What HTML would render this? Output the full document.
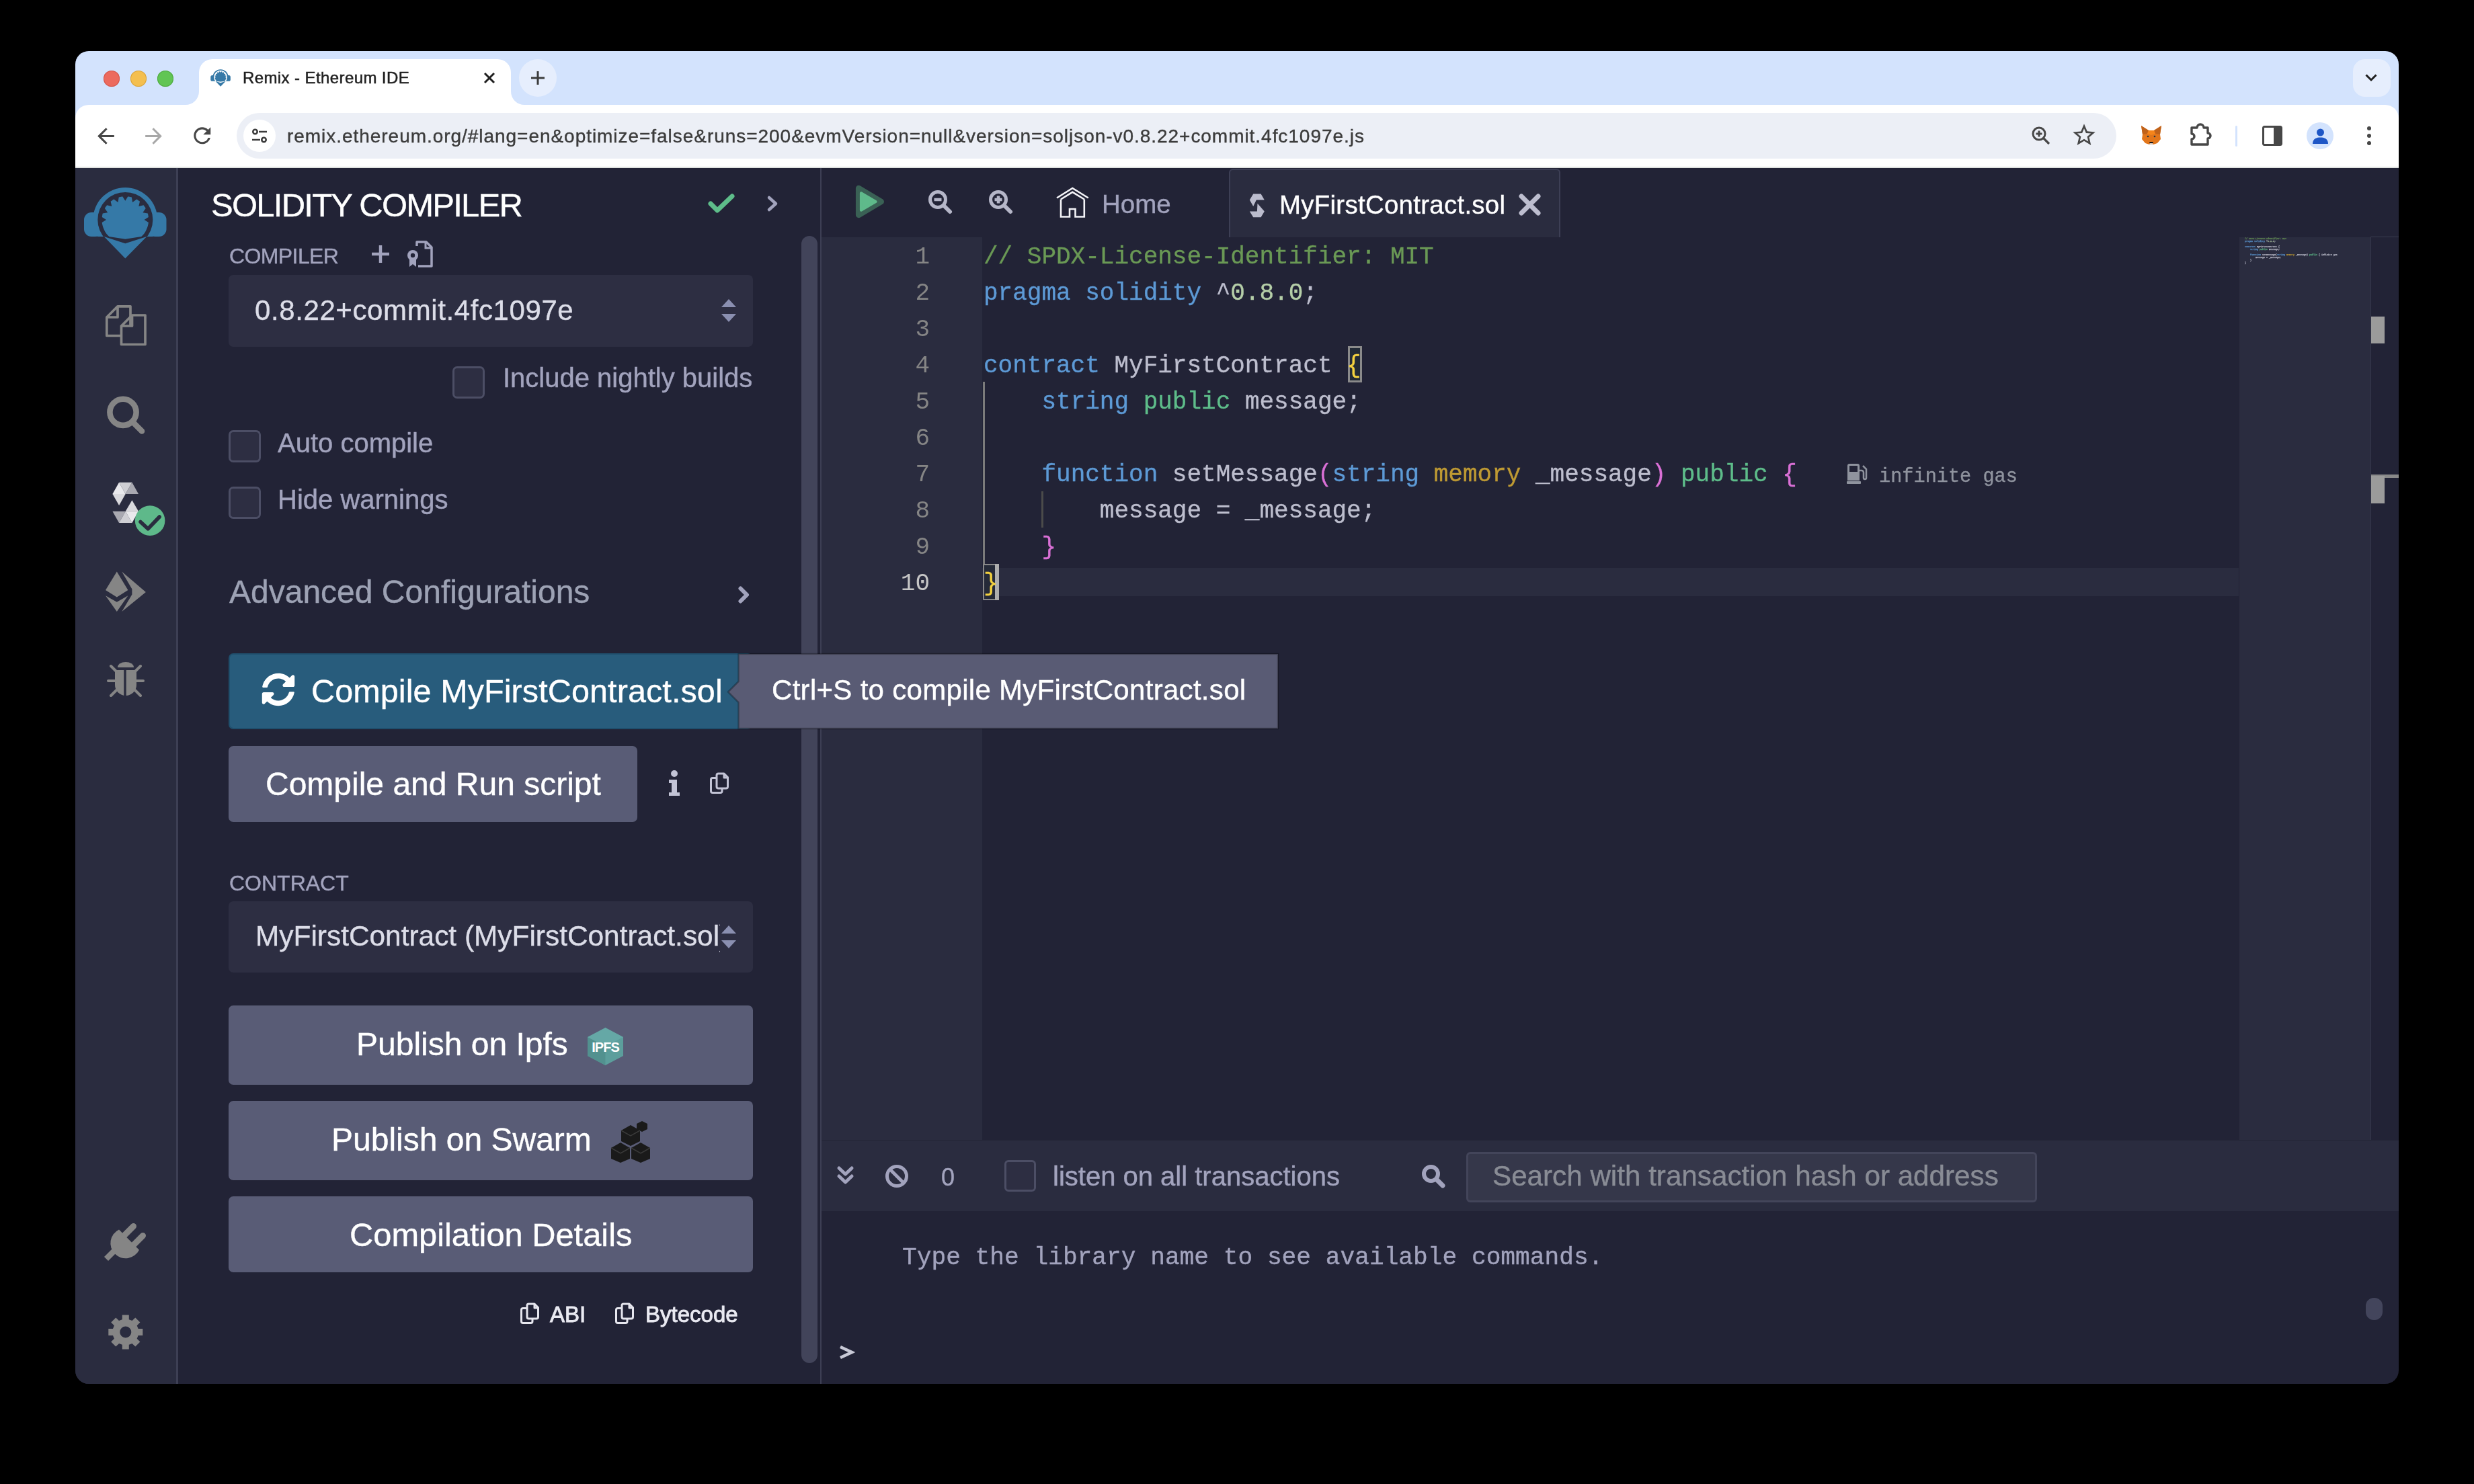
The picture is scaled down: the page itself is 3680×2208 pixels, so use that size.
<!DOCTYPE html>
<html><head><meta charset="utf-8">
<style>
*{margin:0;padding:0;box-sizing:border-box}
html,body{width:3680px;height:2208px;background:#000;overflow:hidden}
body{position:relative;font-family:"Liberation Sans",sans-serif}
.a{position:absolute}
.t{position:absolute;line-height:1;white-space:nowrap}
.m{font-family:"Liberation Mono",monospace}
.t,.m{will-change:transform}
.t{-webkit-text-stroke:0.4px currentColor}
.t.m{-webkit-text-stroke:0}
svg{position:absolute;overflow:visible}
#win{position:absolute;left:0;top:0;width:3680px;height:2208px;clip-path:inset(76px 112px 149px 112px round 20px);background:#222336}
</style></head><body>
<div id="win">
<!-- ===== BROWSER CHROME ===== -->
<div class="a" style="left:0;top:0;width:3680px;height:190px;background:#d3e3fd"></div>
<div class="a" style="left:112px;top:156px;width:3456px;height:94px;background:#fff;border-radius:20px 20px 0 0"></div>
<div class="a" style="left:0;top:248px;width:3680px;height:2px;background:#e1e3e1"></div>
<!-- traffic lights -->
<div class="a" style="left:154px;top:105px;width:24px;height:24px;border-radius:50%;background:#ec6a5e;box-shadow:inset 0 0 0 1px #d2544a"></div>
<div class="a" style="left:194px;top:105px;width:24px;height:24px;border-radius:50%;background:#f4bf4f;box-shadow:inset 0 0 0 1px #d9a33a"></div>
<div class="a" style="left:234px;top:105px;width:24px;height:24px;border-radius:50%;background:#61c554;box-shadow:inset 0 0 0 1px #4ea83f"></div>
<!-- active tab -->
<svg style="left:0;top:0" width="3680" height="260"><path d="M276 156 A20 20 0 0 0 296 136 L296 108 A20 20 0 0 1 316 88 L740 88 A20 20 0 0 1 760 108 L760 136 A20 20 0 0 0 780 156 Z" fill="#fff"/></svg>
<!-- favicon -->
<svg style="left:0;top:0" width="0" height="0"><defs>
<clipPath id="clipTop"><rect x="0" y="0" width="132" height="82"/></clipPath>
<clipPath id="clipShell"><path d="M0 0H132V75.6L66.3 85.8L0 75.6Z"/></clipPath>
<g id="logo">
<circle cx="66.3" cy="57" r="48" fill="#3579a7" clip-path="url(#clipTop)"/>
<rect x="5" y="46" width="28" height="36" rx="11" fill="#3579a7"/>
<rect x="99.5" y="46" width="28" height="36" rx="11" fill="#3579a7"/>
<circle cx="66.3" cy="57" r="41" fill="var(--lbg)"/>
<polygon points="62.4,22.4 66.3,28.7 70.2,22.4 71.4,22.6 72.5,22.8 73.7,23.0 74.8,23.2 75.9,23.5 77.1,30.9 83.2,26.6 84.2,27.1 85.2,27.7 86.1,28.4 87.0,29.1 88.0,29.8 86.3,37.0 93.5,35.3 94.2,36.3 94.9,37.2 95.6,38.1 96.2,39.1 96.7,40.1 92.4,46.2 99.8,47.4 100.1,48.5 100.3,49.6 100.5,50.8 100.7,51.9 100.9,53.1 94.6,57.0 100.9,60.9 100.6,62.9 100.2,64.8 99.7,66.7 99.1,68.5 97.3,72.8 96.0,75.2 94.5,77.5 92.8,79.6 88.9,83.5 86.8,85.2 84.5,86.7 82.1,88.0 77.1,90.1 74.4,90.8 71.7,91.4 69.0,91.7 63.6,91.7 60.9,91.4 58.2,90.8 55.5,90.1 50.5,88.0 48.1,86.7 45.8,85.2 43.7,83.5 39.8,79.6 38.1,77.5 36.6,75.2 35.3,72.8 33.5,68.5 32.9,66.7 32.4,64.8 32.0,62.9 31.7,60.9 38.0,57.0 31.7,53.1 31.9,51.9 32.1,50.8 32.3,49.6 32.5,48.5 32.8,47.4 40.2,46.2 35.9,40.1 36.4,39.1 37.0,38.1 37.7,37.2 38.4,36.3 39.1,35.3 46.3,37.0 44.6,29.8 45.6,29.1 46.5,28.4 47.4,27.7 48.4,27.1 49.4,26.6 55.5,30.9 56.7,23.5 57.8,23.2 58.9,23.0 60.1,22.8 61.2,22.6" fill="#3579a7" clip-path="url(#clipShell)"/>
<path d="M34.8 82.1L66.3 92.2L98.3 82.1L66.3 114.5Z" fill="#3579a7"/>
</g></defs></svg>
<svg style="left:312px;top:101px;--lbg:#fff" width="32" height="29" viewBox="0 0 132 120"><use href="#logo"/></svg>
<div class="t" style="left:361px;top:103.7px;font-size:24px;color:#1f1f1f;letter-spacing:0.4px;-webkit-text-stroke:0.5px #1f1f1f">Remix - Ethereum IDE</div>
<svg style="left:720px;top:108px" width="16" height="16"><path d="M1 1L15 15M15 1L1 15" stroke="#1f1f1f" stroke-width="3"/></svg>
<!-- new tab -->
<div class="a" style="left:772px;top:88px;width:56px;height:56px;border-radius:50%;background:#e6eefd"></div>
<svg style="left:790px;top:106px" width="20" height="20"><path d="M10 0V20M0 10H20" stroke="#3c3c3c" stroke-width="3"/></svg>
<!-- dropdown -->
<div class="a" style="left:3500px;top:88px;width:56px;height:56px;border-radius:18px;background:#e6eefd"></div>
<svg style="left:3518px;top:110px" width="18" height="12"><path d="M1.5 1.5L9 9L16.5 1.5" stroke="#1f1f1f" stroke-width="3" fill="none"/></svg>
<!-- nav icons -->
<svg style="left:138.5px;top:183.5px" width="37" height="37" viewBox="0 0 24 24"><path d="M20 11H7.83l5.59-5.59L12 4l-8 8 8 8 1.41-1.41L7.83 13H20v-2z" fill="#474747"/></svg>
<svg style="left:209.5px;top:183.5px" width="37" height="37" viewBox="0 0 24 24"><path d="M12 4l-1.41 1.41L16.17 11H4v2h12.17l-5.58 5.59L12 20l8-8z" fill="#a8a8a8"/></svg>
<svg style="left:281.5px;top:183px" width="37.5" height="37.5" viewBox="0 0 24 24"><path d="M17.65 6.35A7.958 7.958 0 0 0 12 4c-4.42 0-7.99 3.58-7.99 8s3.57 8 7.99 8c3.73 0 6.84-2.55 7.73-6h-2.08A5.99 5.99 0 0 1 12 18c-3.31 0-6-2.69-6-6s2.69-6 6-6c1.66 0 3.14.69 4.22 1.78L13 11h7V4l-2.35 2.35z" fill="#474747"/></svg>
<!-- omnibox -->
<div class="a" style="left:352px;top:168px;width:2796px;height:68px;border-radius:34px;background:#eceff6"></div>
<div class="a" style="left:362px;top:178px;width:48px;height:48px;border-radius:50%;background:#fff"></div>
<svg style="left:373px;top:189px" width="26" height="26" viewBox="0 0 26 26"><circle cx="6.5" cy="7" r="3.2" fill="none" stroke="#3c3c3c" stroke-width="2.6"/><path d="M12 7H24" stroke="#3c3c3c" stroke-width="2.6"/><circle cx="19.5" cy="19" r="3.2" fill="none" stroke="#3c3c3c" stroke-width="2.6"/><path d="M2 19H14" stroke="#3c3c3c" stroke-width="2.6"/></svg>
<div class="t" style="left:427px;top:188.7px;font-size:28px;color:#3c3c3c;letter-spacing:0.96px">remix.ethereum.org/#lang=en&amp;optimize=false&amp;runs=200&amp;evmVersion=null&amp;version=soljson-v0.8.22+commit.4fc1097e.js</div>
<!-- zoom + star -->
<svg style="left:3021px;top:187px" width="30" height="30" viewBox="0 0 30 30"><circle cx="12" cy="12" r="9" fill="none" stroke="#474747" stroke-width="3"/><path d="M12 7.5V16.5M7.5 12H16.5" stroke="#474747" stroke-width="3"/><path d="M18.5 18.5L27 27" stroke="#474747" stroke-width="3.2"/></svg>
<svg style="left:3080px;top:181px" width="40" height="40" viewBox="0 0 24 24"><path d="M22 9.24l-7.19-.62L12 2 9.19 8.63 2 9.24l5.46 4.73L5.82 21 12 17.27 18.18 21l-1.63-7.03L22 9.24zM12 15.4l-3.76 2.27 1-4.28-3.32-2.88 4.38-.38L12 6.1l1.71 4.04 4.38.38-3.32 2.88 1 4.28L12 15.4z" fill="#474747"/></svg>
<!-- metamask fox -->
<svg style="left:3184px;top:186px" width="32" height="30" viewBox="0 0 32 30"><path d="M1 1L12 8H20L31 1L29 14L30 21L25 27L19 29H13L7 27L2 21L3 14Z" fill="#e2761b"/><path d="M1 1L12 8L10 13L3 14Z M31 1L20 8L22 13L29 14Z" fill="#c0621a"/><path d="M12 8H20L22 13L16 15L10 13Z" fill="#f6851b"/><path d="M13 25H19L18 28H14Z" fill="#161616"/><path d="M13 29H19L18 27H14Z" fill="#d7c1b3"/><circle cx="11" cy="17" r="1.3" fill="#233447"/><circle cx="21" cy="17" r="1.3" fill="#233447"/></svg>
<!-- puzzle -->
<svg style="left:3256px;top:184px" width="34" height="34" viewBox="0 0 34 34"><path d="M4 6H12A5 5 0 0 1 22 6H28V14A4 4 0 0 1 28 22V31H4V23A4 4 0 0 0 4 15Z" fill="none" stroke="#474747" stroke-width="3.4" stroke-linejoin="round"/></svg>
<div class="a" style="left:3325px;top:187px;width:3px;height:31px;border-radius:2px;background:#d3e3fd"></div>
<!-- side panel icon -->
<svg style="left:3365px;top:187px" width="30" height="30" viewBox="0 0 30 30"><rect x="1.5" y="1.5" width="27" height="27" rx="2" fill="none" stroke="#474747" stroke-width="3"/><rect x="17" y="1.5" width="11.5" height="27" fill="#474747"/></svg>
<!-- profile -->
<div class="a" style="left:3431px;top:182px;width:40px;height:40px;border-radius:50%;background:#d3e3fd"></div>
<svg style="left:3439px;top:190px" width="25" height="25" viewBox="0 0 25 25"><circle cx="12.5" cy="7" r="5.5" fill="#1d56c6"/><path d="M1 24C1 16 7 14.5 12.5 14.5S24 16 24 24Z" fill="#1d56c6"/></svg>
<!-- menu dots -->
<svg style="left:3518px;top:187px" width="12" height="30"><circle cx="6" cy="4" r="3" fill="#474747"/><circle cx="6" cy="15" r="3" fill="#474747"/><circle cx="6" cy="26" r="3" fill="#474747"/></svg>

<!-- ===== REMIX ===== -->
<!-- icon bar -->
<div class="a" style="left:112px;top:250px;width:150px;height:1810px;background:#2a2c3f"></div>
<div class="a" style="left:262px;top:250px;width:3px;height:1810px;background:#3d3f54"></div>
<svg style="left:120px;top:270px;--lbg:#2a2c3f" width="132" height="120" viewBox="0 0 132 120"><use href="#logo"/></svg>
<!-- file explorer icon -->
<svg style="left:157px;top:454px" width="60" height="60" viewBox="0 0 60 60"><path d="M1.8 18L18 1.8H37V45.5H1.8Z M1.8 18H18V1.8" fill="none" stroke="#858585" stroke-width="3.7" stroke-linejoin="round"/><path d="M23.5 31L39.5 15H59V58.5H23.5Z M23.5 31H39.5V15" fill="#2a2c3f" stroke="#858585" stroke-width="3.7" stroke-linejoin="round"/></svg>
<!-- search icon -->
<svg style="left:158px;top:589px" width="58" height="58" viewBox="0 0 58 58"><circle cx="25" cy="24.3" r="19.6" fill="none" stroke="#858585" stroke-width="8.6"/><path d="M40 39.5L53 52.5" stroke="#858585" stroke-width="8.5" stroke-linecap="round"/></svg>
<!-- solidity icon with badge -->
<svg style="left:166px;top:717px" width="80" height="80" viewBox="0 0 80 80">
<path d="M1.4 17.9L11.1 0.8L20.7 17.9Z" fill="#e9e9ec"/><path d="M11.1 0.8H30.4L20.7 17.9Z" fill="#cfcfd4"/><path d="M30.4 0.8L40 17.9H20.7Z" fill="#a9a9b1"/><path d="M1.4 17.9H20.7L11.1 34.9Z" fill="#d9d9dd"/>
<path d="M20.7 43.8L30.4 27.2L40 43.8Z" fill="#d9d9dd"/><path d="M1.4 43.8H20.7L11.1 60.9Z" fill="#a9a9b1"/><path d="M11.1 60.9L20.7 43.8L30.4 60.9Z" fill="#cfcfd4"/><path d="M20.7 43.8H40L30.4 60.9Z" fill="#e9e9ec"/>
<circle cx="57.1" cy="57.6" r="22.3" fill="#5eb98a"/><path d="M43 59.4L54.1 69.8L71.2 52" fill="none" stroke="#2a2c3f" stroke-width="5.5" stroke-linecap="round" stroke-linejoin="round"/>
</svg>
<!-- deploy icon -->
<svg style="left:156px;top:850px" width="62" height="62" viewBox="0 0 62 62"><path d="M17.8 0.6L1 28L17.8 38.4L34.4 28Z" fill="#858585"/><path d="M1 36.2L17.8 45.8L34.4 36.2L17.8 60Z" fill="#858585"/><path d="M25.2 0.6L60.9 31L25.2 60L40.4 34.5V26.5Z" fill="#858585"/></svg>
<!-- debug icon -->
<svg style="left:159px;top:983px" width="56" height="56" viewBox="0 0 56 56"><path d="M16 10A12 8 0 0 1 40 10Z" fill="#858585"/><path d="M12 14H44V36A16 16 0 0 1 12 36Z" fill="#858585"/><path d="M27 14V52" stroke="#2a2c3f" stroke-width="3.5"/><path d="M2 30H12M44 30H54M6 8L14 16M50 8L42 16M6 52L14 44M50 52L42 44" stroke="#858585" stroke-width="4" stroke-linecap="round"/></svg>
<!-- plug icon -->
<svg style="left:140px;top:1800px" width="100" height="230" viewBox="0 0 100 230"><path d="M37 29.5L67 59.7A22.5 22.5 0 1 1 37 29.5Z" fill="#858585"/><path d="M45 38L58.5 24.5M59 52L72.5 38.5" stroke="#858585" stroke-width="9" stroke-linecap="round"/><path d="M33 58L18 73" stroke="#858585" stroke-width="8.5"/><path d="M41.8,163.2 L41.8,156.5 L51.8,156.5 L51.8,163.2 L56.5,165.1 L61.3,160.4 L68.4,167.5 L63.7,172.2 L65.6,177.0 L72.3,177.0 L72.3,187.0 L65.6,187.0 L63.7,191.8 L68.4,196.5 L61.3,203.6 L56.5,198.9 L51.8,200.8 L51.8,207.5 L41.8,207.5 L41.8,200.8 L37.1,198.9 L32.3,203.6 L25.2,196.5 L29.9,191.8 L28.0,187.0 L21.3,187.0 L21.3,177.0 L28.0,177.0 L29.9,172.2 L25.2,167.5 L32.3,160.4 L37.0,165.1Z M55.3 182.0 A8.5 8.5 0 1 0 38.3 182.0 A8.5 8.5 0 1 0 55.3 182.0 Z" fill="#858585" fill-rule="evenodd"/></svg>
<!-- settings gear -->

<!-- ===== SIDE PANEL ===== -->
<div class="a" style="left:1220px;top:250px;width:2px;height:1810px;background:#3d3f54"></div>
<div class="t" style="left:314px;top:280.5px;font-size:49px;color:#fff;letter-spacing:-1.75px">SOLIDITY COMPILER</div>
<svg style="left:1053px;top:288px" width="40" height="30" viewBox="0 0 40 30"><path d="M4 15L14 25L36 4" fill="none" stroke="#5ebd8a" stroke-width="7" stroke-linecap="round" stroke-linejoin="round"/></svg>
<svg style="left:1141px;top:291px" width="17" height="24" viewBox="0 0 17 24"><path d="M3 3L13 12L3 21" fill="none" stroke="#a2a3bd" stroke-width="4.5" stroke-linecap="round" stroke-linejoin="round"/></svg>
<!-- scrollbar -->
<div class="a" style="left:1192px;top:351px;width:24px;height:1677px;border-radius:12px;background:#42445a"></div>

<div class="t" style="left:341px;top:365.4px;font-size:32px;color:#a2a3bd;letter-spacing:-0.6px">COMPILER</div>
<svg style="left:551px;top:363px" width="30" height="30"><path d="M15 2V28M2 15H28" stroke="#a2a3bd" stroke-width="4.5"/></svg>
<svg style="left:604px;top:358px" width="40" height="40" viewBox="0 0 40 40"><path d="M16 8V2H30L38 10V38H18" fill="none" stroke="#a2a3bd" stroke-width="3.5" stroke-linejoin="round"/><path d="M29 2V11H38" fill="none" stroke="#a2a3bd" stroke-width="3"/><circle cx="10" cy="22" r="8" fill="#a2a3bd"/><circle cx="10" cy="22" r="3.2" fill="#222336"/><path d="M5 28V39L10 35L15 39V28Z" fill="#a2a3bd"/></svg>
<!-- compiler select -->
<div class="a" style="left:340px;top:409px;width:780px;height:107px;border-radius:7px;background:#2d2e42"></div>
<div class="t" style="left:379px;top:440.9px;font-size:42px;color:#dcdde8;letter-spacing:0.6px">0.8.22+commit.4fc1097e</div>
<svg style="left:1073px;top:445px" width="22" height="35" viewBox="0 0 22 35"><path d="M11 0L22 12H0Z M0 22H22L11 34Z" fill="#8a8fb0"/></svg>
<!-- nightly -->
<div class="a" style="left:673px;top:545px;width:48px;height:48px;border-radius:7px;background:#2d2e42;border:3px solid #4c4e65"></div>
<div class="t" style="left:747.5px;top:542.1px;font-size:40px;color:#a2a3bd">Include nightly builds</div>
<!-- auto compile -->
<div class="a" style="left:340px;top:640px;width:48px;height:48px;border-radius:7px;background:#2d2e42;border:3px solid #4c4e65"></div>
<div class="t" style="left:412.5px;top:638.6px;font-size:40px;color:#a2a3bd">Auto compile</div>
<div class="a" style="left:340px;top:724px;width:48px;height:48px;border-radius:7px;background:#2d2e42;border:3px solid #4c4e65"></div>
<div class="t" style="left:412.5px;top:723.1px;font-size:40px;color:#a2a3bd">Hide warnings</div>
<!-- advanced -->
<div class="t" style="left:341px;top:857.4px;font-size:48px;color:#9da2b4">Advanced Configurations</div>
<svg style="left:1098px;top:872px" width="17" height="26" viewBox="0 0 17 26"><path d="M3.5 3.5L13 13L3.5 22.5" fill="none" stroke="#a2a3bd" stroke-width="6" stroke-linecap="round" stroke-linejoin="round"/></svg>
<!-- compile button -->
<div class="a" style="left:340px;top:972px;width:779px;height:113px;border-radius:7px;background:#285c7c;border:2.5px solid #1f4f6d"></div>
<svg style="left:389px;top:1001px" width="50" height="50" viewBox="0 0 512 512"><path fill="#fff" d="M370.72 133.28C339.458 104.008 298.888 87.962 255.848 88c-77.458.068-144.328 53.178-162.791 126.85-1.344 5.363-6.122 9.15-11.651 9.15H24.103c-7.498 0-13.194-6.807-11.807-14.176C33.933 94.924 134.813 8 256 8c66.448 0 126.791 26.136 171.315 68.685L463.03 40.97C478.149 25.851 504 36.559 504 57.941V192c0 13.255-10.745 24-24 24H345.941c-21.382 0-32.09-25.851-16.971-40.971l41.75-41.749zM32 296h134.059c21.382 0 32.09 25.851 16.971 40.971l-41.75 41.75c31.262 29.273 71.835 45.319 114.876 45.28 77.418-.07 144.315-53.144 162.787-126.849 1.344-5.363 6.122-9.15 11.651-9.15h57.304c7.498 0 13.194 6.807 11.807 14.176C478.067 417.076 377.187 504 256 504c-66.448 0-126.791-26.136-171.315-68.685L48.97 471.03C33.851 486.149 8 475.441 8 454.059V320c0-13.255 10.745-24 24-24z"/></svg>
<div class="t" style="left:463px;top:1004.4px;font-size:48.5px;color:#fff;letter-spacing:0.1px">Compile MyFirstContract.sol</div>
<!-- compile and run -->
<div class="a" style="left:340px;top:1110px;width:608px;height:113px;border-radius:7px;background:#595c76"></div>
<div class="t" style="left:395.4px;top:1143px;font-size:48px;color:#fff">Compile and Run script</div>
<svg style="left:992px;top:1146px" width="22" height="39" viewBox="0 0 22 39"><circle cx="11" cy="5" r="5" fill="#c3c4d6"/><path d="M3 14H15V33H19V38H3V33H7V19H3Z" fill="#c3c4d6"/></svg>
<svg style="left:1055px;top:1149px" width="30" height="33" viewBox="0 0 30 33"><path d="M13.5 2H22L27.5 7.5V21.5A2.5 2.5 0 0 1 25 24H13.5A2.5 2.5 0 0 1 11 21.5V4.5A2.5 2.5 0 0 1 13.5 2Z M22 2V8H27.5" fill="none" stroke="#c3c4d6" stroke-width="3" stroke-linejoin="round"/><path d="M11 8.5H5A2.5 2.5 0 0 0 2.5 11V28A2.5 2.5 0 0 0 5 30.5H16.5A2.5 2.5 0 0 0 19 28V24" fill="none" stroke="#c3c4d6" stroke-width="3" stroke-linejoin="round"/></svg>
<!-- contract -->
<div class="t" style="left:340.5px;top:1298.4px;font-size:32px;color:#a2a3bd">CONTRACT</div>
<div class="a" style="left:340px;top:1341px;width:780px;height:106px;border-radius:7px;background:#2d2e42;overflow:hidden"></div>
<div class="a" style="left:340px;top:1341px;width:731px;height:106px;overflow:hidden"><div class="t" style="left:39.7px;top:31.1px;font-size:42.4px;color:#dcdde8">MyFirstContract (MyFirstContract.sol)</div></div>
<svg style="left:1073px;top:1377px" width="22" height="35" viewBox="0 0 22 35"><path d="M11 0L22 12H0Z M0 22H22L11 34Z" fill="#8a8fb0"/></svg>
<!-- publish buttons -->
<div class="a" style="left:340px;top:1496px;width:780px;height:118px;border-radius:7px;background:#595c76"></div>
<div class="t" style="left:529.6px;top:1529.9px;font-size:48px;color:#fff">Publish on Ipfs</div>
<svg style="left:874px;top:1529px" width="53" height="56" viewBox="0 0 53 56"><path d="M26.5 0L53 14V42L26.5 56L0 42V14Z" fill="#5c9e9c"/><path d="M26.5 28V56L0 42V14Z" fill="#52918f"/><path d="M26.5 0L53 14L26.5 28L0 14Z" fill="#7cc0bd" opacity="0.3"/><text x="26.5" y="36" font-family="Liberation Sans" font-size="20" font-weight="bold" fill="#fff" text-anchor="middle" letter-spacing="-1">IPFS</text></svg>
<div class="a" style="left:340px;top:1638px;width:780px;height:118px;border-radius:7px;background:#595c76"></div>
<div class="t" style="left:493px;top:1672px;font-size:48px;color:#fff">Publish on Swarm</div>
<svg style="left:907px;top:1668px" width="62" height="62" viewBox="0 0 62 62"><path d="M16 32L30 40V56L16 62L2 56V40Z" fill="#1a1a1a"/><path d="M46 32L60 40V56L46 62L32 56V40Z" fill="#1a1a1a"/><path d="M31 6L45 14V30L31 37L17 30V14Z" fill="#1a1a1a"/><path d="M48 0L56 4V12L48 16L40 12V4Z" fill="#1a1a1a"/><path d="M2 40L16 48L30 40 M32 40L46 48L60 40 M17 14L31 22L45 14" fill="none" stroke="#3a3a3a" stroke-width="1.5"/></svg>
<div class="a" style="left:340px;top:1780px;width:780px;height:113px;border-radius:7px;background:#595c76"></div>
<div class="t" style="left:519.5px;top:1812.7px;font-size:48.8px;color:#fff">Compilation Details</div>
<!-- ABI Bytecode -->
<svg style="left:773px;top:1938px" width="30" height="33" viewBox="0 0 30 33"><path d="M13.5 2H22L27.5 7.5V21.5A2.5 2.5 0 0 1 25 24H13.5A2.5 2.5 0 0 1 11 21.5V4.5A2.5 2.5 0 0 1 13.5 2Z M22 2V8H27.5" fill="none" stroke="#e6e6ee" stroke-width="3" stroke-linejoin="round"/><path d="M11 8.5H5A2.5 2.5 0 0 0 2.5 11V28A2.5 2.5 0 0 0 5 30.5H16.5A2.5 2.5 0 0 0 19 28V24" fill="none" stroke="#e6e6ee" stroke-width="3" stroke-linejoin="round"/></svg>
<div class="t" style="left:817.7px;top:1939.1px;font-size:33px;color:#eaeaf2;-webkit-text-stroke:0.9px #eaeaf2">ABI</div>
<svg style="left:914px;top:1938px" width="30" height="33" viewBox="0 0 30 33"><path d="M13.5 2H22L27.5 7.5V21.5A2.5 2.5 0 0 1 25 24H13.5A2.5 2.5 0 0 1 11 21.5V4.5A2.5 2.5 0 0 1 13.5 2Z M22 2V8H27.5" fill="none" stroke="#e6e6ee" stroke-width="3" stroke-linejoin="round"/><path d="M11 8.5H5A2.5 2.5 0 0 0 2.5 11V28A2.5 2.5 0 0 0 5 30.5H16.5A2.5 2.5 0 0 0 19 28V24" fill="none" stroke="#e6e6ee" stroke-width="3" stroke-linejoin="round"/></svg>
<div class="t" style="left:959.8px;top:1939.1px;font-size:33px;color:#eaeaf2;-webkit-text-stroke:0.9px #eaeaf2">Bytecode</div>

<!-- ===== EDITOR ===== -->
<!-- tab bar icons -->
<svg style="left:0;top:0" width="1400" height="400"><path d="M1277.4 280.3L1310.5 300L1277.4 319.7Z" fill="#3a6155" stroke="#3a6155" stroke-width="9" stroke-linejoin="round"/><path d="M1280.9 287.3L1302.6 300L1280.9 312.7Z" fill="#5fba8b" stroke="#5fba8b" stroke-width="4" stroke-linejoin="round"/></svg>
<svg style="left:1380px;top:282px" width="37" height="37" viewBox="0 0 37 37"><circle cx="15" cy="15" r="11.5" fill="none" stroke="#b5b6c8" stroke-width="5"/><path d="M9.5 15H20.5" stroke="#b5b6c8" stroke-width="4.5"/><path d="M24 24L33 33" stroke="#b5b6c8" stroke-width="6" stroke-linecap="round"/></svg>
<svg style="left:1470px;top:282px" width="37" height="37" viewBox="0 0 37 37"><circle cx="15" cy="15" r="11.5" fill="none" stroke="#b5b6c8" stroke-width="5"/><path d="M9.5 15H20.5M15 9.5V20.5" stroke="#b5b6c8" stroke-width="4.5"/><path d="M24 24L33 33" stroke="#b5b6c8" stroke-width="6" stroke-linecap="round"/></svg>
<svg style="left:1571px;top:279px" width="49" height="45" viewBox="0 0 49 45"><path d="M1 15.5L24.3 1L47.8 15.5 M7 17.5L24.3 6.8L41.8 17.5 M7 17.5V43.5H20V32H28.5V43.5H41.8V17.5" fill="none" stroke="#f4f4f8" stroke-width="2.6" stroke-linejoin="miter"/></svg>
<div class="t" style="left:1639px;top:284.6px;font-size:38.5px;color:#a2a3bd;letter-spacing:0px">Home</div>
<!-- active tab -->
<div class="a" style="left:1827.5px;top:251px;width:493px;height:102px;background:#2a2c3f;border:2.5px solid #3d3f55;border-bottom:none;border-radius:6px 6px 0 0"></div>
<svg style="left:0;top:0" width="1900" height="400"><path d="M1864.2 288.5H1875.6L1880.8 297.5H1868.8L1864.2 307L1858.8 297.5Z" fill="#bbbccd"/><path d="M1870.5 302.8L1880.8 314.4L1875.6 323.2H1864.2L1858.8 314.4H1869.9Z" fill="#bbbccd"/></svg>
<div class="t" style="left:1902.5px;top:285.9px;font-size:38.4px;color:#fff;letter-spacing:0.3px">MyFirstContract.sol</div>
<svg style="left:2259px;top:288px" width="33" height="33" viewBox="0 0 33 33"><path d="M4 4L29 29M29 4L4 29" stroke="#bdbecf" stroke-width="7" stroke-linecap="round"/></svg>

<!-- editor body -->
<div class="a" style="left:1222px;top:353px;width:239px;height:1344px;background:#2a2c3f"></div>
<div class="a" style="left:1461px;top:845px;width:1869px;height:42px;background:#2a2c3f"></div>
<div class="a" style="left:3331px;top:353px;width:195px;height:1344px;background:#2a2c3f"></div>
<div class="a" style="left:3526px;top:352px;width:1px;height:1345px;background:#35374b"></div>
<div class="a" style="left:3527px;top:471px;width:20px;height:40px;background:#9b9b9b"></div>
<div class="a" style="left:3527px;top:706px;width:41px;height:5px;background:#8a8a8a"></div>
<div class="a" style="left:3527px;top:708px;width:20px;height:41px;background:#9b9b9b"></div>
<!-- minimap -->
<div class="a m" style="left:3338.8px;top:352.5px;font-size:3.34px;line-height:4px;white-space:pre;color:#c8c9d6;-webkit-text-stroke:0.25px currentColor;opacity:.85"><span style="color:#6a9955">// SPDX-License-Identifier: MIT</span>
<span style="color:#5d9ad6">pragma solidity</span> ^<span style="color:#b5cea8">0.8.0</span>;

<span style="color:#5d9ad6">contract</span> MyFirstContract {
    <span style="color:#5d9ad6">string</span> <span style="color:#5ebd8a">public</span> message;

    <span style="color:#5d9ad6">function</span> setMessage(<span style="color:#5d9ad6">string</span> <span style="color:#bf9a33">memory</span> _message) <span style="color:#5ebd8a">public</span> { infinite gas
        message = _message;
    }
}</div>
<div class="a" style="left:3527px;top:352px;width:41px;height:1px;background:#3a3c50"></div>

<!-- indent guides -->
<div class="a" style="left:1462px;top:568px;width:2.5px;height:271px;background:#7b7b7b"></div>
<div class="a" style="left:1549px;top:731px;width:2.5px;height:54px;background:#4b4b4a"></div>
<!-- bracket match boxes -->
<div class="a" style="left:2005px;top:515px;width:21px;height:54px;border:3px solid #8a8a8a;background:#222a36"></div>
<div class="a" style="left:1462px;top:839px;width:24px;height:54px;border:2.5px solid #888;background:#252a38"></div>
<div class="a" style="left:1480px;top:839px;width:6px;height:54px;background:#aeaeae"></div>

<!-- line numbers -->
<div class="a m" style="left:1222px;top:355.9px;width:161px;font-size:36px;line-height:54px;text-align:right;color:#858585;white-space:pre">1
2
3
4
5
6
7
8
9
<span style="color:#c6c6c6">10</span></div>
<!-- code -->
<div class="a m" style="left:1462.5px;top:355.9px;font-size:36px;line-height:54px;color:#bdbece;white-space:pre;-webkit-text-stroke:0.35px currentColor"><span style="color:#6a9955">// SPDX-License-Identifier: MIT</span>
<span style="color:#5d9ad6">pragma</span> <span style="color:#5d9ad6">solidity</span> ^<span style="color:#b5cea8">0.8.0</span>;

<span style="color:#5d9ad6">contract</span> MyFirstContract <span style="color:#f4d23f">{</span>
    <span style="color:#5d9ad6">string</span> <span style="color:#5ebd8a">public</span> message;

    <span style="color:#5d9ad6">function</span> setMessage<span style="color:#da70d6">(</span><span style="color:#5d9ad6">string</span> <span style="color:#bf9a33">memory</span> _message<span style="color:#da70d6">)</span> <span style="color:#5ebd8a">public</span> <span style="color:#da70d6">{</span>
        message = _message;
    <span style="color:#da70d6">}</span>
<span style="color:#f4d23f">}</span></div>
<!-- infinite gas -->
<svg style="left:2747px;top:690px" width="31" height="30" viewBox="0 0 31 30"><path d="M1 3A3 3 0 0 1 4 0H16A3 3 0 0 1 19 3V25H1Z" fill="#8f939e"/><rect x="4" y="3" width="12" height="9" fill="#222336"/><rect x="0" y="26" width="21" height="4" rx="1" fill="#8f939e"/><path d="M19 10H22A3 3 0 0 1 25 13V21A2 2 0 0 0 29 21V8L24 3" fill="none" stroke="#8f939e" stroke-width="2.5"/></svg>
<div class="t m" style="left:2795.4px;top:696.1px;font-size:28.6px;color:#8f939e;-webkit-text-stroke:0.35px #8f939e">infinite gas</div>

<!-- ===== TERMINAL ===== -->
<div class="a" style="left:1222px;top:1696px;width:2346px;height:2px;background:#26283a"></div>
<div class="a" style="left:1222px;top:1698px;width:2346px;height:104px;background:#2a2c3f"></div>
<svg style="left:1245px;top:1735px" width="25" height="28" viewBox="0 0 25 28"><path d="M3 3L12.5 12L22 3M3 15L12.5 24L22 15" fill="none" stroke="#a2a3bd" stroke-width="5" stroke-linecap="round" stroke-linejoin="round"/></svg>
<svg style="left:1316px;top:1732px" width="36" height="36" viewBox="0 0 36 36"><circle cx="18" cy="18" r="14.5" fill="none" stroke="#a2a3bd" stroke-width="5"/><path d="M8 8L28 28" stroke="#a2a3bd" stroke-width="5"/></svg>
<div class="t" style="left:1400px;top:1733.5px;font-size:36px;color:#a2a3bd">0</div>
<div class="a" style="left:1494px;top:1726px;width:47px;height:47px;border-radius:6px;background:#2d2e42;border:3px solid #4c4e65"></div>
<div class="t" style="left:1566px;top:1729.6px;font-size:40px;color:#a2a3bd">listen on all transactions</div>
<svg style="left:2114px;top:1732px" width="36" height="36" viewBox="0 0 36 36"><circle cx="14.5" cy="14.5" r="10.5" fill="none" stroke="#a2a3bd" stroke-width="6"/><path d="M23 23L32 32" stroke="#a2a3bd" stroke-width="7" stroke-linecap="round"/></svg>
<div class="a" style="left:2181px;top:1714px;width:849px;height:75px;border-radius:6px;background:#35374a;border:3px solid #43455a"></div>
<div class="t" style="left:2220px;top:1729.3px;font-size:42.2px;color:#898c95">Search with transaction hash or address</div>
<div class="t m" style="left:1341.5px;top:1854.3px;font-size:36.2px;color:#a2a3bd;-webkit-text-stroke:0.35px #a2a3bd">Type the library name to see available commands.</div>
<svg style="left:1248px;top:2002px" width="22" height="20" viewBox="0 0 22 20"><path d="M2 2L19 10L2 18" fill="none" stroke="#c8c9d6" stroke-width="4.5"/></svg>
<div class="a" style="left:3519px;top:1931px;width:25px;height:33px;border-radius:12px;background:#43455c"></div>


<!-- tooltip -->
<svg style="left:0;top:0" width="3680" height="1200"><path d="M1098.5 973 H1901 V1084 H1098.5 V1045 L1083 1029.5 L1098.5 1014 Z" fill="#595b74" stroke="rgba(0,0,0,0.28)" stroke-width="2.5"/></svg>
<div class="t" style="left:1148px;top:1006.4px;font-size:42px;color:#fff;letter-spacing:0.3px">Ctrl+S to compile MyFirstContract.sol</div>
</div>
</body></html>
